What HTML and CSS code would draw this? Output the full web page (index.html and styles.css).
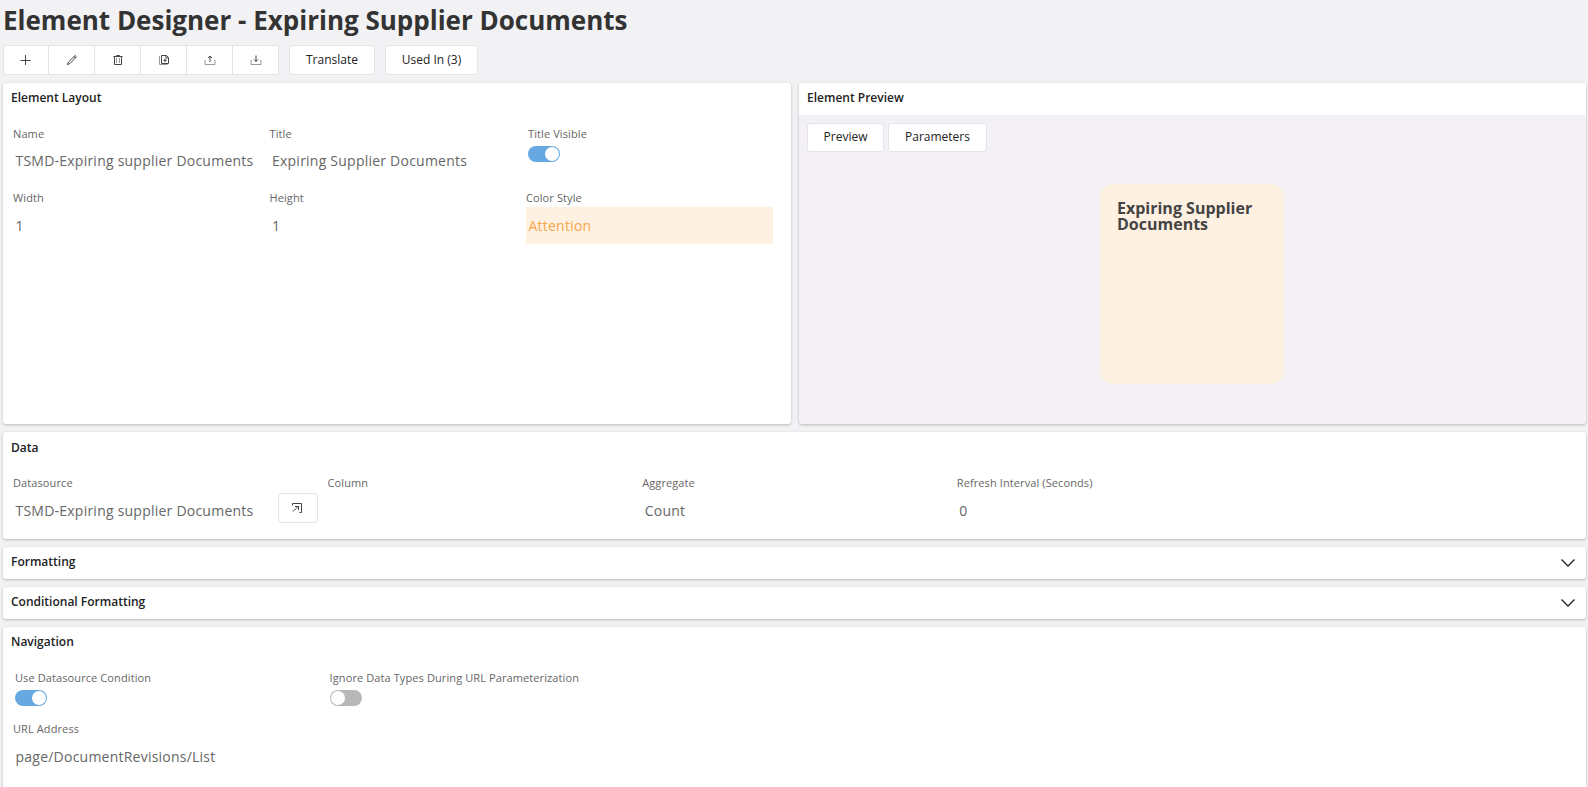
FILE: index.html
```html
<!DOCTYPE html>
<html lang="en">
<head>
  <meta charset="UTF-8">
  <meta name="viewport" content="width=device-width, initial-scale=1.0">
  <title>Element Designer</title>
  <link rel="stylesheet" href="styles.css">
</head>
<body>
  <div class="page">
    <h1>Element Designer - Expiring Supplier Documents</h1>

    <!-- Toolbar -->
    <div class="toolbar">
      <div class="btn-group">
        <button class="btn icon-btn" aria-label="New"><svg viewBox="0 0 12 12"><path d="M5.500 1v10M.5 6.500h10"/></svg></button>
        <button class="btn icon-btn" aria-label="Edit"><svg viewBox="0 0 12 12"><path d="M1.500 10.500l.8-2.300 6.900-6.700 1.300 1.300L3.800 9.700zM8 2.700l1.300 1.300"/></svg></button>
        <button class="btn icon-btn" aria-label="Delete"><svg viewBox="0 0 12 12"><path d="M1.500 2.500h9M4.500 2v-.500h3v.500M2.500 2.500v8h7v-8"/><path class="tray" d="M4.500 4v5M7.500 4v5"/></svg></button>
        <button class="btn icon-btn" aria-label="Copy"><svg viewBox="0 0 12 12"><path d="M3.500 1.500h5l2 2v6h-7zM8 1.500v2.500h2.500M7 4.500v3.500M5.300 6.300h3.400"/><path class="tray" d="M1.500 2v8.500h8"/></svg></button>
        <button class="btn icon-btn" aria-label="Export"><svg viewBox="0 0 12 12"><path d="M6 8v-6M4 4l2-2 2 2"/><path class="tray" d="M2 6.500h-1v4h10v-4h-1"/></svg></button>
        <button class="btn icon-btn" aria-label="Import"><svg viewBox="0 0 12 12"><path d="M6 1.500v6M4 5.500l2 2 2-2"/><path class="tray" d="M2 6.500h-1v4h10v-4h-1"/></svg></button>
      </div>
      <button class="btn translate">Translate</button>
      <button class="btn used-in">Used In (3)</button>
    </div>

    <div class="top-row">
      <!-- Element Layout -->
      <section class="panel">
        <h2>Element Layout</h2>
        <div class="fields layout-fields">
          <div class="field">
            <label>Name</label>
            <div class="value text-value">TSMD-Expiring supplier Documents</div>
          </div>
          <div class="field">
            <label>Title</label>
            <div class="value text-value">Expiring Supplier Documents</div>
          </div>
          <div class="field switch-field">
            <label>Title Visible</label>
            <div class="switch on"></div>
          </div>
          <div class="field">
            <label>Width</label>
            <div class="value">1</div>
          </div>
          <div class="field">
            <label>Height</label>
            <div class="value">1</div>
          </div>
          <div class="field">
            <label>Color Style</label>
            <div class="value attention">Attention</div>
          </div>
        </div>
      </section>

      <!-- Element Preview -->
      <section class="panel preview-panel">
        <h2>Element Preview</h2>
        <div class="preview-actions">
          <button class="btn preview-btn">Preview</button>
          <button class="btn params-btn">Parameters</button>
        </div>
        <div class="card">Expiring Supplier Documents</div>
      </section>
    </div>

    <!-- Data -->
    <section class="panel data-panel">
      <h2>Data</h2>
      <div class="fields wide-fields">
        <div class="field">
          <label>Datasource</label>
          <div class="lookup">
            <div class="value">TSMD-Expiring supplier Documents</div>
            <button class="btn open-btn" aria-label="Open"><svg viewBox="0 0 12 12"><path d="M.5 3.500v-2h9v9h-2M1 9.500l5.500-5.500M3 4.500h3.500v3.500"/></svg></button>
          </div>
        </div>
        <div class="field">
          <label>Column</label>
          <div class="value"></div>
        </div>
        <div class="field">
          <label>Aggregate</label>
          <div class="value">Count</div>
        </div>
        <div class="field">
          <label>Refresh Interval (Seconds)</label>
          <div class="value">0</div>
        </div>
      </div>
    </section>

    <!-- Collapsed sections -->
    <section class="panel collapsed">
      <h2>Formatting</h2>
      <svg class="chevron" viewBox="0 0 16 10"><path d="M1.500 1.500L8 8l6.500-6.500"/></svg>
    </section>
    <section class="panel collapsed">
      <h2>Conditional Formatting</h2>
      <svg class="chevron" viewBox="0 0 16 10"><path d="M1.500 1.500L8 8l6.500-6.500"/></svg>
    </section>

    <!-- Navigation -->
    <section class="panel nav-panel">
      <h2>Navigation</h2>
      <div class="fields wide-fields nav-fields">
        <div class="field switch-field">
          <label>Use Datasource Condition</label>
          <div class="switch on"></div>
        </div>
        <div class="field switch-field">
          <label>Ignore Data Types During URL Parameterization</label>
          <div class="switch"></div>
        </div>
      </div>
      <div class="field url-field">
        <label>URL Address</label>
        <div class="value">page/DocumentRevisions/List</div>
      </div>
    </section>
  </div>
</body>
</html>
```
FILE: styles.css
```css
* {
  box-sizing: border-box;
}
body {
  margin: 0;
  height: 787px;
  overflow: hidden;
  background-color: #f2f1f3;
  font-family: "Open Sans", sans-serif;
  color: #222;
}
.page {
  display: flex;
  flex-direction: column;
  gap: 8px;
  height: 787px;
  padding: 0 2px 0 3px;
}
h1 {
  flex-shrink: 0;
  margin: 0;
  height: 37px;
  line-height: 41px;
  font-size: 26px;
  font-weight: bold;
  color: #333;
  white-space: nowrap;
}
h2 {
  margin: 0;
  height: 32px;
  padding-left: 8px;
  line-height: 30px;
  font-size: 12px;
  font-weight: 600;
  color: #222;
}
.toolbar {
  display: flex;
  flex-shrink: 0;
  height: 30px;
}
.btn-group {
  display: flex;
}
.btn {
  display: flex;
  align-items: center;
  justify-content: center;
  height: 30px;
  padding: 0 0 1px;
  border: 1px solid #e6e4e8;
  border-radius: 3px;
  background-color: #fff;
  font-family: inherit;
  font-size: 12px;
  color: #222;
}
.btn svg {
  width: 12px;
  height: 12px;
}
svg {
  fill: none;
  stroke: #444;
  stroke-width: 1;
}
svg .tray {
  stroke: #999;
}
.icon-btn {
  width: 46px;
  border-left-width: 0;
  border-radius: 0;
}
.icon-btn:first-child {
  border-left-width: 1px;
  border-radius: 3px 0 0 3px;
}
.translate {
  width: 86px;
  margin-left: 10px;
}
.used-in {
  width: 93px;
  margin-left: 10px;
}
.panel {
  flex-shrink: 0;
  border-radius: 3px;
  background-color: #fff;
  box-shadow: 0 1px 3px rgba(0, 0, 0, 0.24);
}
.top-row {
  display: grid;
  flex-shrink: 0;
  grid-template-columns: 788px 787px;
  gap: 8px;
  height: 341px;
}
.fields {
  display: grid;
  padding: 11px 0 0 10px;
}
.layout-fields {
  grid-template-columns: repeat(3, 247px);
  gap: 10px 9.500px;
}
.wide-fields {
  grid-template-columns: repeat(5, 314.600px);
}
.field label {
  display: block;
  height: 17px;
  line-height: 15px;
  font-size: 11px;
  letter-spacing: 0.1px;
  color: #666;
}
.value {
  height: 37px;
  padding-left: 2.500px;
  line-height: 37px;
  font-size: 14px;
  letter-spacing: 0.230px;
  color: #666;
  white-space: nowrap;
}
.text-value {
  line-height: 35px;
}
.attention {
  background-color: #fff1e2;
  color: #f5a64a;
}
.switch-field {
  padding-left: 2px;
}
.switch {
  display: flex;
  width: 32px;
  height: 16px;
  margin-top: 3px;
  padding: 1px;
  border-radius: 8px;
  background-color: #b8b8b8;
}
.switch::before {
  content: "";
  width: 14px;
  height: 14px;
  border-radius: 50%;
  background-color: #fff;
}
.switch.on {
  justify-content: flex-end;
  background-color: #66a9e2;
}
.preview-panel {
  background-color: #f3f1f5;
}
.preview-panel h2 {
  border-radius: 3px 3px 0 0;
  background-color: #fff;
}
.preview-actions {
  display: flex;
  gap: 4px;
  padding: 8px 8px 0;
}
.preview-actions .btn {
  height: 29px;
  padding-bottom: 2px;
}
.preview-btn {
  width: 77px;
}
.params-btn {
  width: 99px;
}
.card {
  width: 184px;
  height: 200px;
  margin: 32px 0 0 301px;
  padding: 16px 16px 16px 17px;
  border-radius: 14px;
  background-color: #fff1e2;
  line-height: 16px;
  font-size: 16px;
  font-weight: bold;
  color: #444;
}
.data-panel {
  height: 107px;
}
.data-panel h2 {
  line-height: 32px;
}
.lookup {
  display: flex;
  justify-content: space-between;
  width: 305px;
}
.open-btn {
  width: 40px;
  margin-top: 1px;
}
.collapsed {
  display: flex;
  justify-content: space-between;
  align-items: center;
  height: 32px;
  padding-right: 10px;
}
.chevron {
  width: 16px;
  height: 10px;
  stroke: #222;
  stroke-width: 1.300;
}
.nav-panel {
  height: 180px;
}
.nav-fields {
  padding-top: 11px;
}
.url-field {
  padding: 15px 0 0 10px;
}
```
